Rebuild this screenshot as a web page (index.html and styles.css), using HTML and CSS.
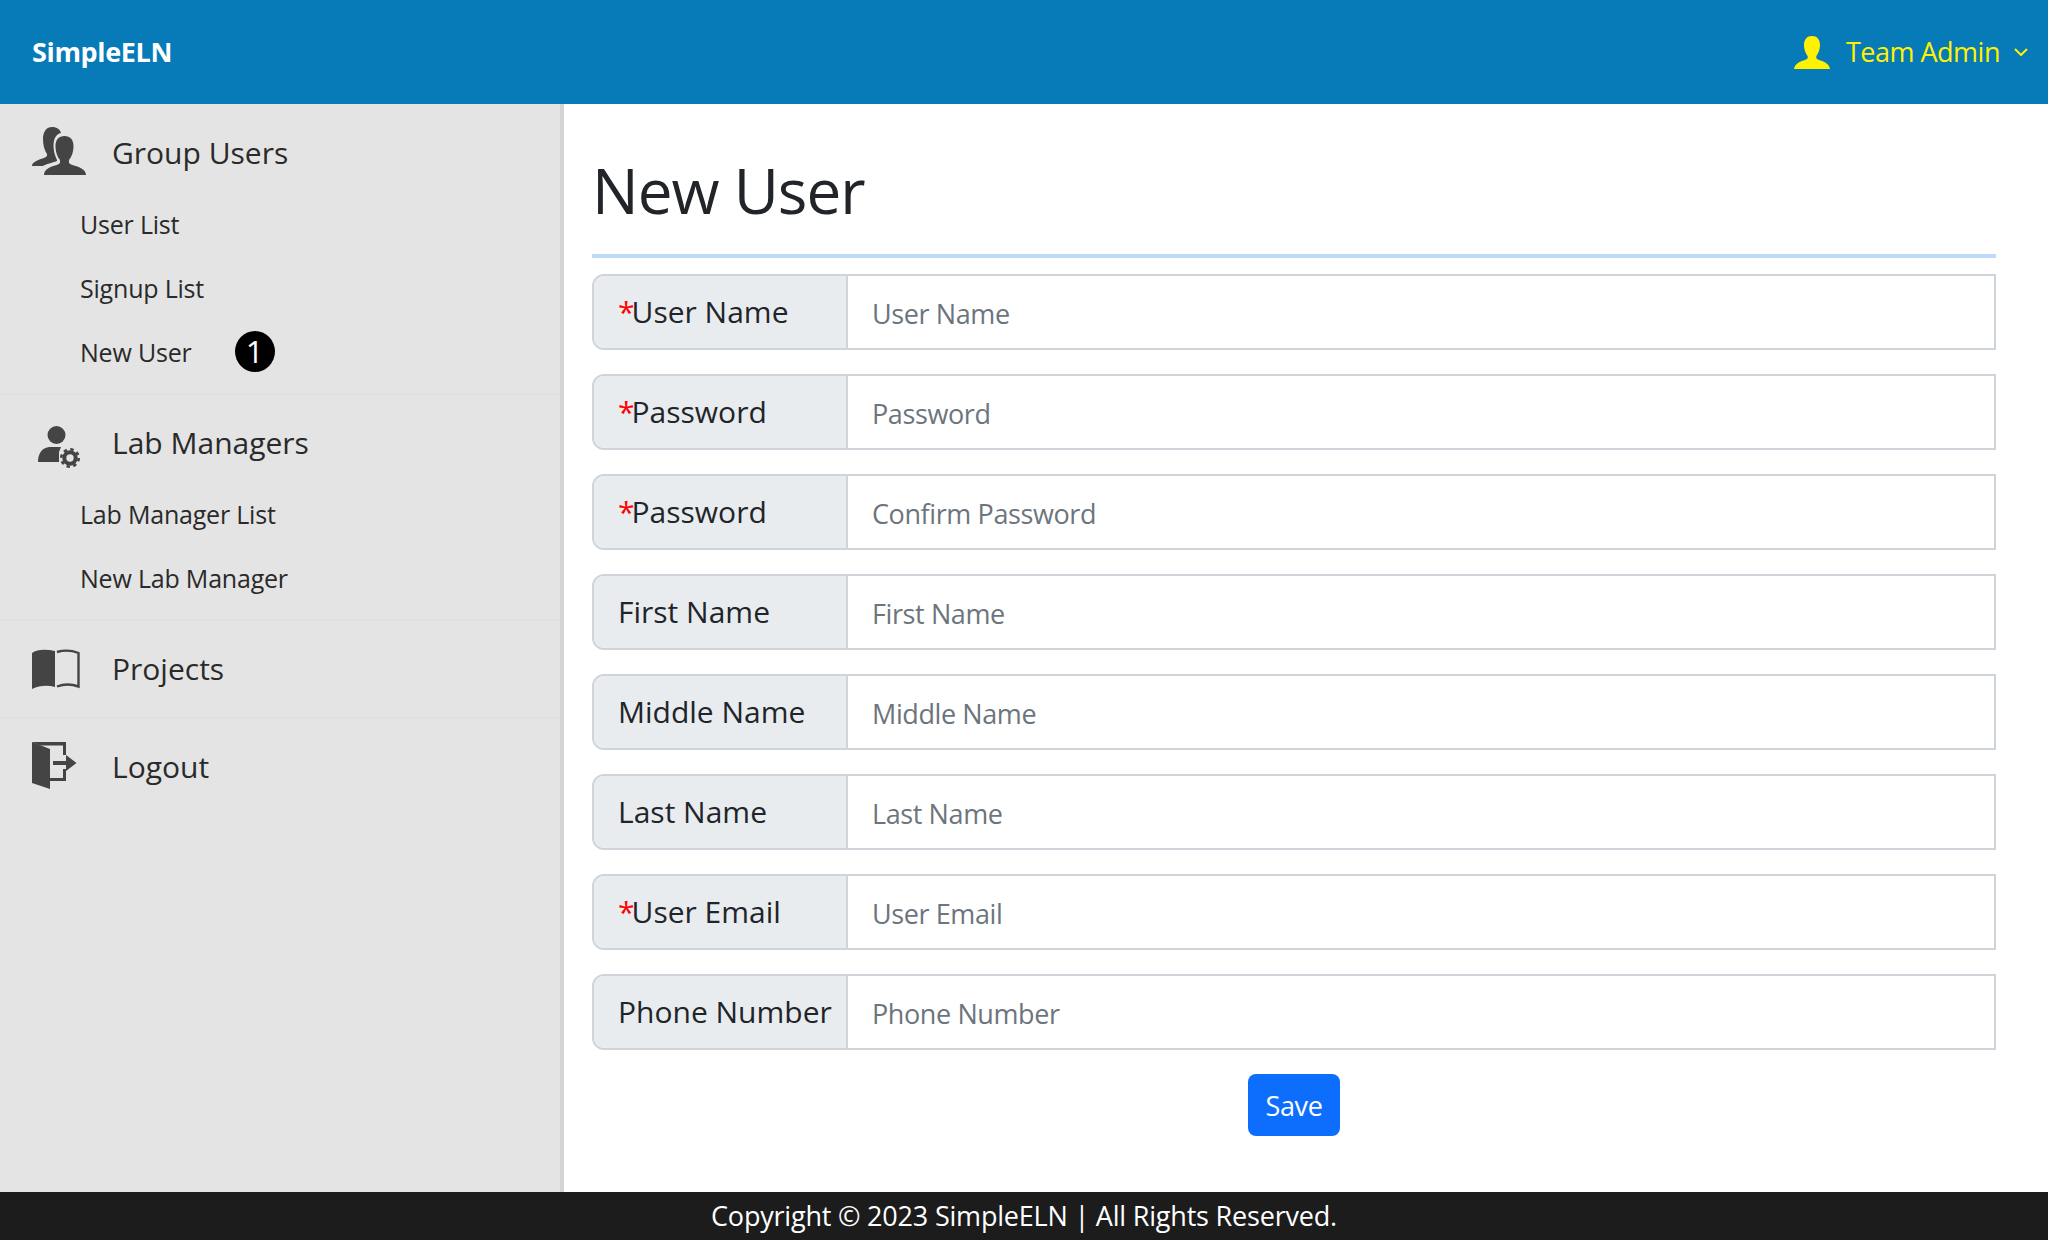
FILE: index.html
```html
<!DOCTYPE html>
<html lang="en">
<head>
<meta charset="utf-8">
<title>SimpleELN - New User</title>
<link rel="stylesheet" href="styles.css">
</head>
<body>
<header class="topbar">
  <a class="brand">SimpleELN</a>
  <div class="account">
    <svg class="account-icon" viewBox="0 0 36 33"><path d="M18 0c5 0 8 3.400 8 9 0 4.500-2 9-3.700 11v2c0 2 8 2.500 11.500 6.500 1.200 1.400 2 3 2.200 4.500H0c.2-1.500 1-3.100 2.200-4.500C5.700 24.500 13.700 24 13.700 22v-2C12 18 10 13.500 10 9c0-5.600 3-9 8-9z"/></svg>
    <span class="account-name">Team Admin</span>
    <svg class="chevron" viewBox="0 0 14 8"><path d="M1 1l6 6 6-6"/></svg>
  </div>
</header>
<div class="layout">
  <nav class="sidebar">
    <section class="nav-group">
      <div class="nav-head">
        <span class="icon-slot"><svg class="icon-group" viewBox="0 0 54 48"><path d="M0 39C0 35 6 33 13 30.500L15 29V27C12.500 23.500 11 18 11 12 11 4.500 14.500 0 20 0c5 0 8 2.500 9 6-5 1-7.500 6-7.500 13 0 5 1.500 10 3.500 14v1c-5 2-11 3-14 5z"/><path d="M12 48c0-6 6-8 14-10.500L28 36v-3c-2.500-3-4.500-8-4.500-14 0-6.500 3.500-10 9-10s9 3.500 9 10c0 6-2 11-4.500 14v3l2 1.500C47 40 54 42 54 48z"/></svg></span>
        <span class="nav-title">Group Users</span>
      </div>
      <a class="nav-link">User List</a>
      <a class="nav-link">Signup List</a>
      <a class="nav-link">New User<span class="badge">1</span></a>
    </section>
    <section class="nav-group">
      <div class="nav-head">
        <span class="icon-slot"><svg class="icon-gear" viewBox="0 0 42 42"><circle cx="18.500" cy="9" r="9"/><path d="M0 36C0 29 3 22 11 21H23L21 26V36z"/><circle class="gear-ring" cx="32" cy="32" r="5.700"/><circle class="gear-teeth" cx="32" cy="32" r="8.700"/></svg></span>
        <span class="nav-title">Lab Managers</span>
      </div>
      <a class="nav-link">Lab Manager List</a>
      <a class="nav-link">New Lab Manager</a>
    </section>
    <section class="nav-group">
      <div class="nav-head">
        <span class="icon-slot"><svg class="icon-book" viewBox="0 0 48 40"><path d="M0 4C5 .500 13 0 23 2v36c-7-2-15-2-23 2z"/><path class="book-page" d="M25 3c7-2 14-2 21.500 1v33.500c-7-2.500-15-2.500-21.500 0"/></svg></span>
        <span class="nav-title">Projects</span>
      </div>
    </section>
    <section class="nav-group nav-group-last">
      <div class="nav-head">
        <span class="icon-slot"><svg class="icon-door" viewBox="0 0 44.500 47"><path d="M0 0L18 7V47L0 41z"/><path d="M0 0H34V13H31V3.500H8z"/><path d="M18 36H31V27H34V39H18z"/><path d="M21 19H34V13L44.500 21 34 29V23H21z"/></svg></span>
        <span class="nav-title">Logout</span>
      </div>
    </section>
  </nav>
  <main class="content">
    <h1 class="page-title">New User</h1>
    <form class="user-form">
      <label class="field"><span class="field-label"><em class="req">*</em>User Name</span><input class="field-input" type="text" placeholder="User Name"></label>
      <label class="field"><span class="field-label"><em class="req">*</em>Password</span><input class="field-input" type="password" placeholder="Password"></label>
      <label class="field"><span class="field-label"><em class="req">*</em>Password</span><input class="field-input" type="password" placeholder="Confirm Password"></label>
      <label class="field"><span class="field-label">First Name</span><input class="field-input" type="text" placeholder="First Name"></label>
      <label class="field"><span class="field-label">Middle Name</span><input class="field-input" type="text" placeholder="Middle Name"></label>
      <label class="field"><span class="field-label">Last Name</span><input class="field-input" type="text" placeholder="Last Name"></label>
      <label class="field"><span class="field-label"><em class="req">*</em>User Email</span><input class="field-input" type="email" placeholder="User Email"></label>
      <label class="field"><span class="field-label">Phone Number</span><input class="field-input" type="text" placeholder="Phone Number"></label>
      <div class="form-actions"><button class="save-btn" type="button">Save</button></div>
    </form>
  </main>
</div>
<footer class="footer">Copyright © 2023 SimpleELN | All Rights Reserved.</footer>
</body>
</html>
```
FILE: styles.css
```css
* { box-sizing: border-box; }
html, body { height: 100%; }
body {
  margin: 0;
  height: 100vh;
  display: flex;
  flex-direction: column;
  overflow: hidden;
  font-family: "Open Sans", "Noto Sans", sans-serif;
  color: #212529;
  background: #fff;
}
.topbar {
  height: 104px;
  flex: none;
  display: flex;
  align-items: center;
  justify-content: space-between;
  padding: 0 20px 0 32px;
  background: #077ab8;
}
.brand {
  color: #fff;
  font-size: 27px;
  font-weight: 700;
  letter-spacing: -0.35px;
  padding-bottom: 2px;
}
.account {
  display: flex;
  align-items: center;
  color: #fff200;
  fill: #fff200;
}
.account-icon { width: 36px; height: 33px; margin-right: 16px; }
.account-name { font-size: 27px; letter-spacing: -0.5px; padding-bottom: 2px; }
.chevron {
  width: 14px;
  height: 8px;
  margin-left: 14px;
  fill: none;
  stroke: #fff200;
  stroke-width: 2;
}
.layout { flex: 1; display: flex; min-height: 0; }
.sidebar {
  width: 564px;
  flex: none;
  padding-top: 1px;
  background: #e4e4e4;
  border-right: 4px solid #d4d4d4;
  color: #2a2a2a;
}
.nav-group {
  padding-bottom: 8px;
  border-bottom: 2px solid #e0e0e0;
}
.nav-group-last { border-bottom: 0; }
.nav-head {
  height: 88px;
  padding: 8px 0 0 32px;
  display: flex;
  align-items: center;
  font-size: 30px;
}
.nav-title { padding-bottom: 2px; }
.icon-slot {
  width: 80px;
  flex: none;
  display: flex;
  align-items: center;
}
.icon-slot svg { display: block; fill: #444; flex: none; }
.icon-group { width: 54px; height: 48px; margin-top: -4px; }
.icon-gear { width: 42px; height: 42px; margin: 8px 0 0 6px; }
.icon-book { width: 48px; height: 40px; }
.icon-door { width: 44.500px; height: 47px; margin-top: -4px; }
.gear-ring, .gear-teeth, .book-page { fill: none; stroke: #444; }
.icon-slot .gear-ring, .icon-slot .gear-teeth, .icon-slot .book-page { fill: none; }
.gear-ring { stroke-width: 4; }
.gear-teeth { stroke-width: 2.600; stroke-dasharray: 3.400 3.432; }
.book-page { stroke-width: 2.400; }
.nav-link {
  height: 64px;
  display: flex;
  align-items: center;
  padding: 0 0 2px 80px;
  font-size: 25px;
  letter-spacing: -0.2px;
}
.badge {
  position: relative;
  margin-left: 43px;
  top: -1px;
  width: 40px;
  height: 41px;
  border-radius: 50%;
  background: #000;
  color: #fff;
  display: flex;
  align-items: center;
  justify-content: center;
  font-size: 31px;
}
.content {
  flex: 1;
  padding: 0 52px 0 28px;
  min-width: 0;
}
.page-title {
  margin: 0;
  height: 154px;
  padding-top: 44px;
  font-size: 62px;
  font-weight: 400;
  line-height: 84px;
  border-bottom: 4px solid #c0d8fb;
  letter-spacing: -1px;
}
.user-form { display: flex; flex-direction: column; gap: 24px; padding-top: 16px; }
.field {
  display: flex;
  height: 76px;
  border: 2px solid #ced4da;
  border-radius: 12px 0 0 12px;
  overflow: hidden;
}
.field-label {
  width: 254px;
  flex: none;
  display: flex;
  align-items: center;
  padding: 0 0 2px 24px;
  background: #e9ecef;
  border-right: 2px solid #ced4da;
  font-size: 30px;
  letter-spacing: 0;
  white-space: nowrap;
}
.req { color: #f00; font-style: normal; margin-right: -3px; }
.field-input {
  flex: 1;
  min-width: 0;
  border: 0;
  outline: 0;
  padding: 2px 0 0 24px;
  font: 27px "Open Sans", "Noto Sans", sans-serif;
  letter-spacing: -0.4px;
  color: #212529;
}
.field-input::placeholder { color: #6c757d; opacity: 1; }
.form-actions { display: flex; justify-content: center; }
.save-btn {
  width: 92px;
  height: 62px;
  padding: 0;
  border: 0;
  border-radius: 8px;
  background: #0d6efd;
  color: #fff;
  font: 27px "Open Sans", "Noto Sans", sans-serif;
  letter-spacing: -0.4px;
}
.footer {
  height: 48px;
  flex: none;
  background: #1c1c1c;
  color: #fff;
  font-size: 27px;
  letter-spacing: -0.2px;
  text-align: center;
  line-height: 48px;
}
```
